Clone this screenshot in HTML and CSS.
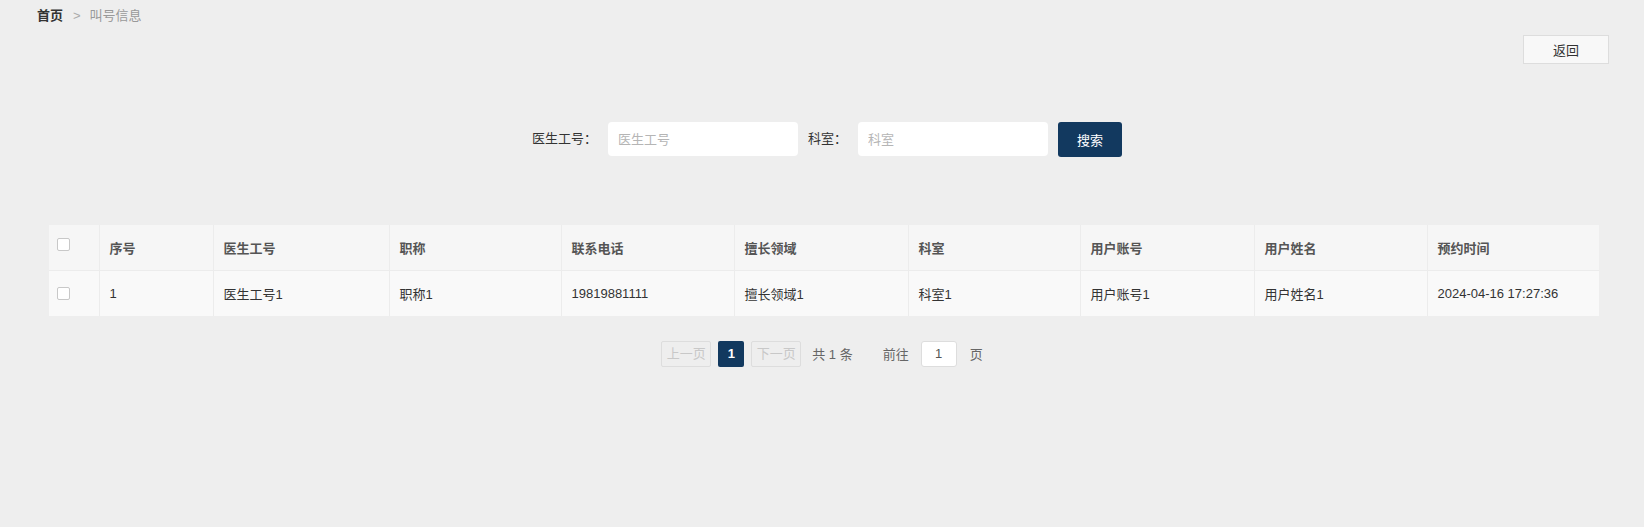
FILE: index.html
```html
<!DOCTYPE html>
<html lang="zh-CN">
<head>
<meta charset="utf-8">
<title>叫号信息</title>
<link rel="stylesheet" href="styles.css">
</head>
<body>
<div class="breadcrumb">
  <span class="crumb-home">首页</span>
  <span class="crumb-sep">&gt;</span>
  <span class="crumb-current">叫号信息</span>
</div>
<div class="toolbar">
  <button class="btn-back" type="button">返回</button>
</div>
<form class="search">
  <label class="search-label">医生工号：</label>
  <input class="search-input" type="text" placeholder="医生工号">
  <label class="search-label">科室：</label>
  <input class="search-input" type="text" placeholder="科室">
  <button class="btn-search" type="button">搜索</button>
</form>
<table class="grid">
  <colgroup>
    <col class="c-check"><col class="c-no"><col class="c-doc"><col class="c-title"><col class="c-phone">
    <col class="c-field"><col class="c-dept"><col class="c-acc"><col class="c-name"><col class="c-time">
  </colgroup>
  <thead>
    <tr>
      <th class="cell-check"><span class="checkbox"></span></th>
      <th>序号</th>
      <th>医生工号</th>
      <th>职称</th>
      <th>联系电话</th>
      <th>擅长领域</th>
      <th>科室</th>
      <th>用户账号</th>
      <th>用户姓名</th>
      <th>预约时间</th>
    </tr>
  </thead>
  <tbody>
    <tr>
      <td class="cell-check"><span class="checkbox"></span></td>
      <td>1</td>
      <td>医生工号1</td>
      <td>职称1</td>
      <td>19819881111</td>
      <td>擅长领域1</td>
      <td>科室1</td>
      <td>用户账号1</td>
      <td>用户姓名1</td>
      <td>2024-04-16 17:27:36</td>
    </tr>
  </tbody>
</table>
<div class="pager">
  <span class="pg-btn pg-disabled pg-prev">上一页</span>
  <span class="pg-btn pg-active">1</span>
  <span class="pg-btn pg-disabled pg-next">下一页</span>
  <span class="pg-total">共 1 条</span>
  <span class="pg-goto">前往</span>
  <span class="pg-input">1</span>
  <span class="pg-unit">页</span>
</div>
</body>
</html>
```
FILE: styles.css
```css
html, body {
  margin: 0;
  padding: 0;
}
body {
  background: #eeeeee;
  font-family: "Liberation Sans", "Noto Sans CJK SC", sans-serif;
  font-size: 13px;
  color: #333;
  width: 1644px;
  height: 527px;
  overflow: hidden;
}
.breadcrumb {
  height: 32px;
  line-height: 32px;
  padding-left: 37px;
  display: flex;
  align-items: center;
}
.crumb-home {
  font-weight: bold;
  color: #333;
}
.crumb-sep {
  color: #aaa;
  margin: 0 9px 0 10px;
}
.crumb-current {
  color: #999;
}
.toolbar {
  display: flex;
  justify-content: flex-end;
  padding-right: 35px;
  margin-top: 3px;
}
.btn-back {
  width: 86px;
  height: 29px;
  border: 1px solid #dddddd;
  background: #f8f8f8;
  color: #333;
  font-family: inherit;
  font-size: 13px;
  padding: 0;
  margin: 0;
}
.search {
  display: flex;
  justify-content: center;
  align-items: flex-start;
  margin: 58px 0 0 0;
  padding-left: 10px;
  height: 35px;
}
.search-label {
  height: 34px;
  line-height: 34px;
  color: #333;
  margin-right: 11px;
}
.search-input {
  width: 190px;
  height: 34px;
  box-sizing: border-box;
  border: none;
  border-radius: 4px;
  background: #fff;
  padding: 0 10px;
  margin: 0 10px 0 0;
  font-family: inherit;
  font-size: 13px;
  outline: none;
}
.search-input::placeholder {
  color: #b5b5b5;
}
.btn-search {
  width: 64px;
  height: 35px;
  border: none;
  border-radius: 3px;
  background: #12395f;
  color: #fff;
  font-family: inherit;
  font-size: 13px;
  padding: 0;
  margin: 0;
}
.grid {
  margin: 68px 0 0 49px;
  width: 1550px;
  table-layout: fixed;
  border-collapse: collapse;
}
.c-check { width: 50px; }
.c-no { width: 114px; }
.c-doc { width: 176px; }
.c-title { width: 172px; }
.c-phone { width: 173px; }
.c-field { width: 174px; }
.c-dept { width: 172px; }
.c-acc { width: 174px; }
.c-name { width: 173px; }
.c-time { width: 172px; }
.grid th, .grid td {
  text-align: left;
  padding: 0 10px;
  border-left: 1px solid #ececec;
  white-space: nowrap;
}
.grid th:first-child, .grid td:first-child {
  border-left: none;
}
.grid th {
  height: 45px;
  background: #f6f6f6;
  color: #555;
  font-weight: bold;
  border-bottom: 1px solid #ececec;
}
.grid td {
  height: 45px;
  background: #f9f9f9;
  color: #333;
}
.grid .cell-check {
  padding: 0 0 0 8px;
}
.checkbox {
  display: block;
  width: 13px;
  height: 13px;
  box-sizing: border-box;
  border: 1px solid #c8c8c8;
  border-radius: 2px;
  background: #fff;
}
th .checkbox {
  margin-top: -6px;
}
.pager {
  display: flex;
  justify-content: center;
  align-items: center;
  margin-top: 24px;
  height: 27px;
  color: #666;
}
.pg-btn {
  height: 26px;
  line-height: 24px;
  box-sizing: border-box;
  text-align: center;
  border-radius: 2px;
}
.pg-disabled {
  width: 50px;
  border: 1px solid #dddddd;
  color: #c8c8c8;
}
.pg-active {
  width: 26px;
  background: #12395f;
  color: #fff;
  font-weight: bold;
  line-height: 26px;
  margin: 0 7px;
}
.pg-total {
  margin-left: 11px;
}
.pg-goto {
  margin-left: 30px;
}
.pg-input {
  width: 36px;
  height: 26px;
  line-height: 24px;
  box-sizing: border-box;
  border: 1px solid #dddddd;
  border-radius: 3px;
  background: #fff;
  color: #555;
  text-align: center;
  margin: 0 13px 0 12px;
}
```
